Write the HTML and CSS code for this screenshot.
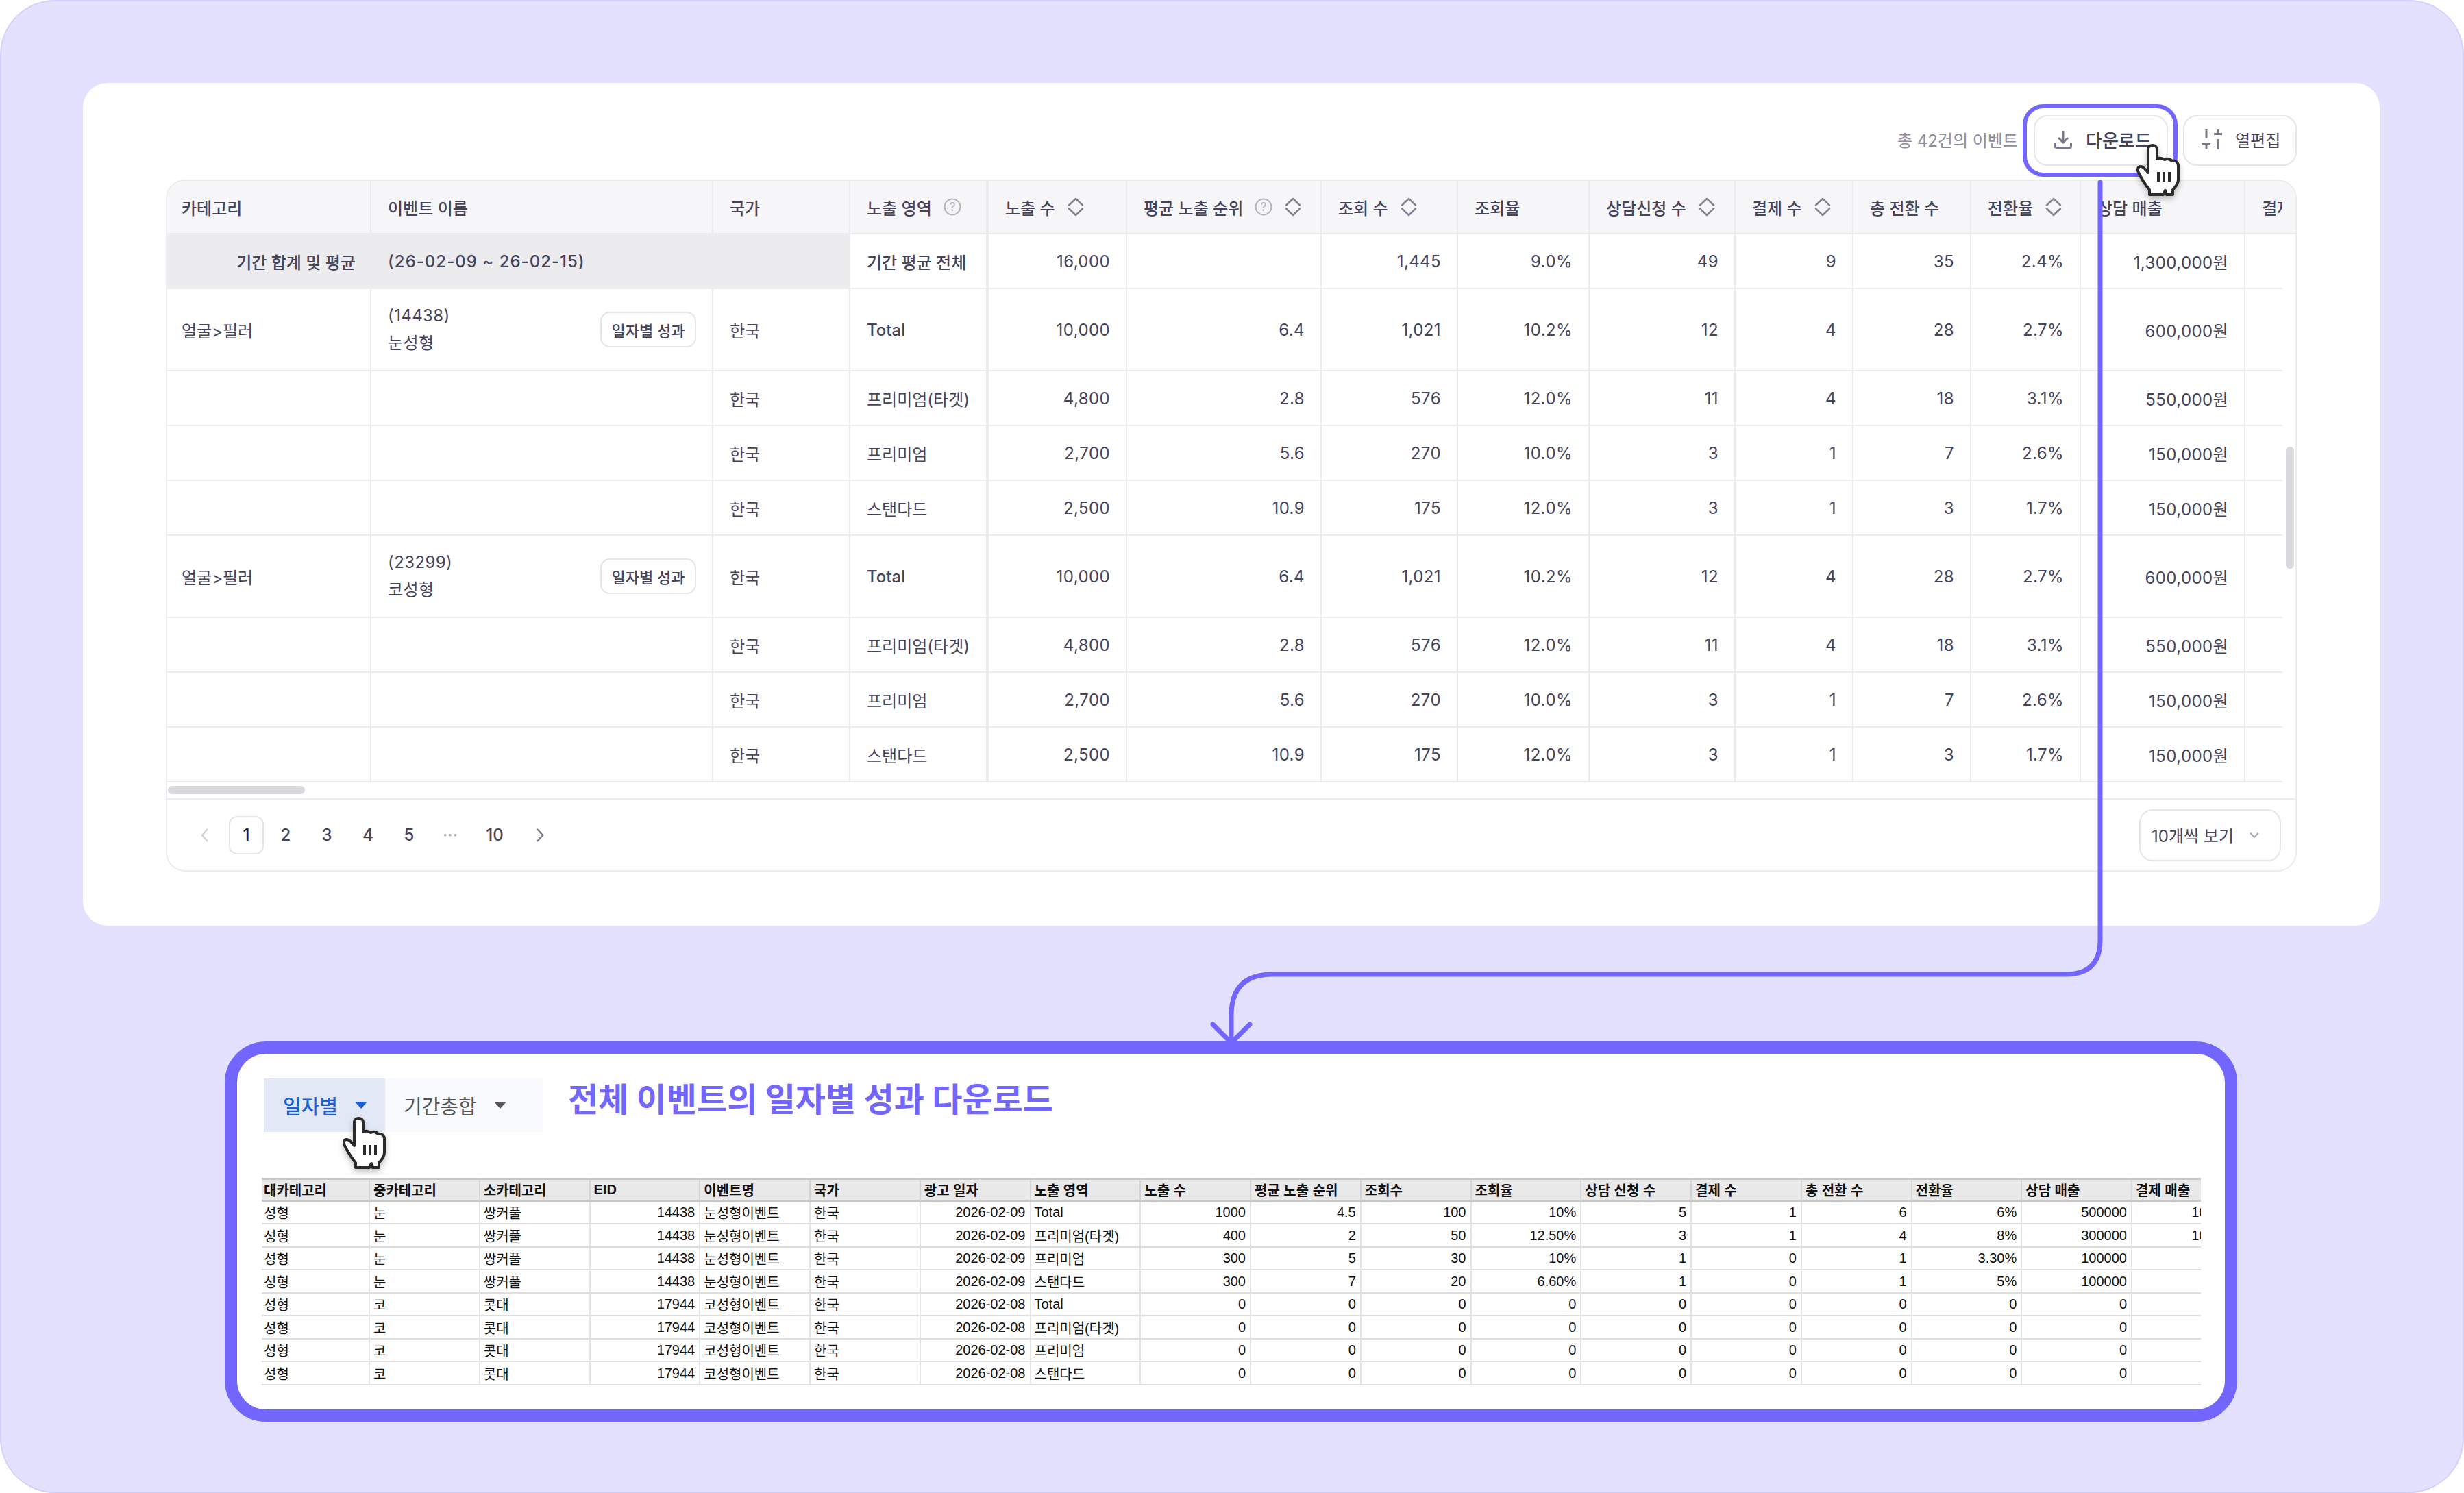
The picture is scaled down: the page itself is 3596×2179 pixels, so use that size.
FILE: index.html
```html
<!DOCTYPE html>
<html lang="ko">
<head>
    <meta charset="UTF-8">
    <title>이벤트 성과 다운로드</title>
    <link rel="stylesheet" href="styles.css">
</head>
<body>
    <svg class="icon-defs" width="0" height="0">
        <symbol id="i-sort" viewBox="0 0 26 28">
            <path d="M3 11.5 13 2l10 9.5M3 16.5 13 26l10-9.5" fill="none" stroke="currentColor" stroke-width="2.5" stroke-linecap="round" stroke-linejoin="round"/>
        </symbol>
        <symbol id="i-help" viewBox="0 0 26 26">
            <circle cx="13" cy="13" r="11.5" fill="none" stroke="currentColor" stroke-width="2"/>
            <text x="13" y="19" text-anchor="middle" font-size="17" font-family="Inter, sans-serif" fill="currentColor">?</text>
        </symbol>
        <symbol id="i-hand" viewBox="0 0 64 76" overflow="visible">
            <path d="M19 74V67C14 61 8 52 3 42 1 37 2 33 6 33 10 33 14 38 17 42V8C17 0 30 0 30 8V22C34 20 38 21 41 23 45 21 49 22 52 25 57 24 61 27 61 32V52C61 58 57 63 53 67V74H44L42 68 39 74Z" fill="#fff" stroke="#2a2a2a" stroke-width="4" stroke-linejoin="round"/>
            <path d="M32 41V55M40 41V55M48 41V55" fill="none" stroke="#2a2a2a" stroke-width="4"/>
        </symbol>
    </svg>

    <div class="frame">
        <section class="card">
            <div class="toolbar">
                <span class="total-count">총 42건의 이벤트</span>
                <div class="highlight">
                    <button class="tool-btn tool-btn-main">
                        <svg class="tool-icon" width="26" height="27" viewBox="0 0 26 27"><path d="M13 1v16M6 11l7 7 7-7M1.500 18v5.500q0 2 2 2h19q2 0 2-2V18" fill="none" stroke="currentColor" stroke-width="3"/></svg>
                        다운로드
                    </button>
                </div>
                <button class="tool-btn tool-btn-edit">
                    <svg class="tool-icon" width="29" height="29" viewBox="0 0 29 29"><path d="M6 0v13M6 22v7M0 21.500h12M23 0v5M23 14v15M17 6.500h12" fill="none" stroke="currentColor" stroke-width="3"/></svg>
                    열편집
                </button>
            </div>

            <div class="grid-box">
                <div class="grid-body">
                    <div class="grid-clip">
                        <table class="grid">
                            <colgroup>
                                <col class="c-298"><col class="c-499"><col class="c-200"><col class="c-202"><col class="c-202"><col class="c-284"><col class="c-199"><col class="c-192"><col class="c-213"><col class="c-172"><col class="c-172"><col class="c-160"><col class="c-240"><col class="c-240">
                            </colgroup>
                            <thead>
                                <tr>
                                    <th>카테고리</th>
                                    <th>이벤트 이름</th>
                                    <th>국가</th>
                                    <th class="sticky-edge"><span class="th-in">노출 영역<svg class="help" width="26" height="26"><use href="#i-help"/></svg></span></th>
                                    <th><span class="th-in">노출 수<svg class="sort" width="26" height="28"><use href="#i-sort"/></svg></span></th>
                                    <th><span class="th-in">평균 노출 순위<svg class="help" width="26" height="26"><use href="#i-help"/></svg><svg class="sort" width="26" height="28"><use href="#i-sort"/></svg></span></th>
                                    <th><span class="th-in">조회 수<svg class="sort" width="26" height="28"><use href="#i-sort"/></svg></span></th>
                                    <th>조회율</th>
                                    <th><span class="th-in">상담신청 수<svg class="sort" width="26" height="28"><use href="#i-sort"/></svg></span></th>
                                    <th><span class="th-in">결제 수<svg class="sort" width="26" height="28"><use href="#i-sort"/></svg></span></th>
                                    <th>총 전환 수</th>
                                    <th><span class="th-in">전환율<svg class="sort" width="26" height="28"><use href="#i-sort"/></svg></span></th>
                                    <th>상담 매출</th>
                                    <th>결제 매출</th>
                                </tr>
                            </thead>
                            <tbody>
                                <tr class="row-sum">
                                    <td class="sum-title">기간 합계 및 평균</td>
                                    <td class="sum-title sum-range" colspan="2">(26-02-09 ~ 26-02-15)</td>
                                    <td class="sticky-edge strong">기간 평균 전체</td>
                                    <td class="num">16,000</td><td class="num"></td><td class="num">1,445</td><td class="num">9.0%</td><td class="num">49</td><td class="num">9</td><td class="num">35</td><td class="num">2.4%</td><td class="num">1,300,000원</td><td></td>
                                </tr>
                                <tr class="row-tall">
                                    <td>얼굴&gt;필러</td>
                                    <td><div class="event-cell"><div class="event-name">(14438)<br>눈성형</div><button class="daily-btn">일자별 성과</button></div></td>
                                    <td>한국</td><td class="sticky-edge strong">Total</td>
                                    <td class="num">10,000</td><td class="num">6.4</td><td class="num">1,021</td><td class="num">10.2%</td><td class="num">12</td><td class="num">4</td><td class="num">28</td><td class="num">2.7%</td><td class="num">600,000원</td><td></td>
                                </tr>
                                <tr>
                                    <td></td><td></td><td>한국</td><td class="sticky-edge">프리미엄(타겟)</td>
                                    <td class="num">4,800</td><td class="num">2.8</td><td class="num">576</td><td class="num">12.0%</td><td class="num">11</td><td class="num">4</td><td class="num">18</td><td class="num">3.1%</td><td class="num">550,000원</td><td></td>
                                </tr>
                                <tr>
                                    <td></td><td></td><td>한국</td><td class="sticky-edge">프리미엄</td>
                                    <td class="num">2,700</td><td class="num">5.6</td><td class="num">270</td><td class="num">10.0%</td><td class="num">3</td><td class="num">1</td><td class="num">7</td><td class="num">2.6%</td><td class="num">150,000원</td><td></td>
                                </tr>
                                <tr>
                                    <td></td><td></td><td>한국</td><td class="sticky-edge">스탠다드</td>
                                    <td class="num">2,500</td><td class="num">10.9</td><td class="num">175</td><td class="num">12.0%</td><td class="num">3</td><td class="num">1</td><td class="num">3</td><td class="num">1.7%</td><td class="num">150,000원</td><td></td>
                                </tr>
                                <tr class="row-tall">
                                    <td>얼굴&gt;필러</td>
                                    <td><div class="event-cell"><div class="event-name">(23299)<br>코성형</div><button class="daily-btn">일자별 성과</button></div></td>
                                    <td>한국</td><td class="sticky-edge strong">Total</td>
                                    <td class="num">10,000</td><td class="num">6.4</td><td class="num">1,021</td><td class="num">10.2%</td><td class="num">12</td><td class="num">4</td><td class="num">28</td><td class="num">2.7%</td><td class="num">600,000원</td><td></td>
                                </tr>
                                <tr>
                                    <td></td><td></td><td>한국</td><td class="sticky-edge">프리미엄(타겟)</td>
                                    <td class="num">4,800</td><td class="num">2.8</td><td class="num">576</td><td class="num">12.0%</td><td class="num">11</td><td class="num">4</td><td class="num">18</td><td class="num">3.1%</td><td class="num">550,000원</td><td></td>
                                </tr>
                                <tr>
                                    <td></td><td></td><td>한국</td><td class="sticky-edge">프리미엄</td>
                                    <td class="num">2,700</td><td class="num">5.6</td><td class="num">270</td><td class="num">10.0%</td><td class="num">3</td><td class="num">1</td><td class="num">7</td><td class="num">2.6%</td><td class="num">150,000원</td><td></td>
                                </tr>
                                <tr>
                                    <td></td><td></td><td>한국</td><td class="sticky-edge">스탠다드</td>
                                    <td class="num">2,500</td><td class="num">10.9</td><td class="num">175</td><td class="num">12.0%</td><td class="num">3</td><td class="num">1</td><td class="num">3</td><td class="num">1.7%</td><td class="num">150,000원</td><td></td>
                                </tr>
                            </tbody>
                        </table>
                    </div>
                    <div class="v-rail">
                        <div class="v-rail-head"></div>
                        <div class="v-thumb"></div>
                    </div>
                </div>
                <div class="h-rail"><div class="h-thumb"></div></div>
                <div class="pager-row">
                    <div class="pager">
                        <svg class="pager-prev" width="14" height="22" viewBox="0 0 14 22"><path d="M11 2 3 11l8 9" fill="none" stroke="currentColor" stroke-width="2.500"/></svg>
                        <span class="page page-on">1</span>
                        <span class="page">2</span>
                        <span class="page">3</span>
                        <span class="page">4</span>
                        <span class="page">5</span>
                        <span class="page page-dots">···</span>
                        <span class="page page-wide">10</span>
                        <svg class="pager-next" width="14" height="22" viewBox="0 0 14 22"><path d="M3 2l8 9-8 9" fill="none" stroke="currentColor" stroke-width="2.500"/></svg>
                    </div>
                    <div class="page-size">
                        10개씩 보기
                        <svg width="14" height="10" viewBox="0 0 14 10"><path d="M1 1.500l6 6.500 6-6.500" fill="none" stroke="currentColor" stroke-width="2.200"/></svg>
                    </div>
                </div>
            </div>
        </section>

        <section class="export-box">
            <div class="export-head">
                <div class="tabs">
                    <div class="tab tab-on">일자별<span class="caret"></span></div>
                    <div class="tab tab-off">기간총합<span class="caret"></span></div>
                </div>
                <h2 class="export-title">전체 이벤트의 일자별 성과 다운로드</h2>
            </div>
            <div class="sheet-clip">
                <table class="sheet">
                    <thead>
                        <tr><th>대카테고리</th><th>중카테고리</th><th>소카테고리</th><th>EID</th><th>이벤트명</th><th>국가</th><th>광고 일자</th><th>노출 영역</th><th>노출 수</th><th>평균 노출 순위</th><th>조회수</th><th>조회율</th><th>상담 신청 수</th><th>결제 수</th><th>총 전환 수</th><th>전환율</th><th>상담 매출</th><th>결제 매출</th></tr>
                    </thead>
                    <tbody>
                        <tr><td>성형</td><td>눈</td><td>쌍커풀</td><td class="r">14438</td><td>눈성형이벤트</td><td>한국</td><td class="r">2026-02-09</td><td>Total</td><td class="r">1000</td><td class="r">4.5</td><td class="r">100</td><td class="r">10%</td><td class="r">5</td><td class="r">1</td><td class="r">6</td><td class="r">6%</td><td class="r">500000</td><td class="r">100000</td></tr>
                        <tr><td>성형</td><td>눈</td><td>쌍커풀</td><td class="r">14438</td><td>눈성형이벤트</td><td>한국</td><td class="r">2026-02-09</td><td>프리미엄(타겟)</td><td class="r">400</td><td class="r">2</td><td class="r">50</td><td class="r">12.50%</td><td class="r">3</td><td class="r">1</td><td class="r">4</td><td class="r">8%</td><td class="r">300000</td><td class="r">100000</td></tr>
                        <tr><td>성형</td><td>눈</td><td>쌍커풀</td><td class="r">14438</td><td>눈성형이벤트</td><td>한국</td><td class="r">2026-02-09</td><td>프리미엄</td><td class="r">300</td><td class="r">5</td><td class="r">30</td><td class="r">10%</td><td class="r">1</td><td class="r">0</td><td class="r">1</td><td class="r">3.30%</td><td class="r">100000</td><td class="r">0</td></tr>
                        <tr><td>성형</td><td>눈</td><td>쌍커풀</td><td class="r">14438</td><td>눈성형이벤트</td><td>한국</td><td class="r">2026-02-09</td><td>스탠다드</td><td class="r">300</td><td class="r">7</td><td class="r">20</td><td class="r">6.60%</td><td class="r">1</td><td class="r">0</td><td class="r">1</td><td class="r">5%</td><td class="r">100000</td><td class="r">0</td></tr>
                        <tr><td>성형</td><td>코</td><td>콧대</td><td class="r">17944</td><td>코성형이벤트</td><td>한국</td><td class="r">2026-02-08</td><td>Total</td><td class="r">0</td><td class="r">0</td><td class="r">0</td><td class="r">0</td><td class="r">0</td><td class="r">0</td><td class="r">0</td><td class="r">0</td><td class="r">0</td><td class="r">0</td></tr>
                        <tr><td>성형</td><td>코</td><td>콧대</td><td class="r">17944</td><td>코성형이벤트</td><td>한국</td><td class="r">2026-02-08</td><td>프리미엄(타겟)</td><td class="r">0</td><td class="r">0</td><td class="r">0</td><td class="r">0</td><td class="r">0</td><td class="r">0</td><td class="r">0</td><td class="r">0</td><td class="r">0</td><td class="r">0</td></tr>
                        <tr><td>성형</td><td>코</td><td>콧대</td><td class="r">17944</td><td>코성형이벤트</td><td>한국</td><td class="r">2026-02-08</td><td>프리미엄</td><td class="r">0</td><td class="r">0</td><td class="r">0</td><td class="r">0</td><td class="r">0</td><td class="r">0</td><td class="r">0</td><td class="r">0</td><td class="r">0</td><td class="r">0</td></tr>
                        <tr><td>성형</td><td>코</td><td>콧대</td><td class="r">17944</td><td>코성형이벤트</td><td>한국</td><td class="r">2026-02-08</td><td>스탠다드</td><td class="r">0</td><td class="r">0</td><td class="r">0</td><td class="r">0</td><td class="r">0</td><td class="r">0</td><td class="r">0</td><td class="r">0</td><td class="r">0</td><td class="r">0</td></tr>
                    </tbody>
                </table>
            </div>
        </section>

        <!-- connector from the download button to the export preview -->
        <svg class="connector" width="3596" height="2179" viewBox="0 0 3596 2179">
            <path d="M3065 266V1372Q3065 1422 3015 1422H1857Q1797 1422 1797 1482V1522M1770 1495 1797 1522 1824 1495" fill="none" stroke="#7366ff" stroke-width="7" stroke-linecap="round"/>
        </svg>
        <svg class="hand hand-download" width="64" height="76"><use href="#i-hand"/></svg>
        <svg class="hand hand-tab" width="64" height="76"><use href="#i-hand"/></svg>
    </div>
</body>
</html>
```

FILE: styles.css
```css
:root {
    --accent: #7366ff;
    --lavender: #e4e1ff;
    --line: #ececee;
    --text: #46445c;
    --muted: #8e8d9e;
}

* {
    margin: 0;
    padding: 0;
    box-sizing: border-box;
    font-family: Inter, 'Noto Sans CJK KR', sans-serif;
}

body {
    background: #fff;
    color: var(--text);
    width: 3596px;
    height: 2179px;
    overflow: hidden;
}

.icon-defs {
    position: absolute;
}

.frame {
    position: relative;
    width: 3596px;
    height: 2179px;
    padding: 119px 119px 0;
    background: var(--lavender);
    border: 2px solid #d5d1fd;
    border-radius: 80px;
    display: flex;
    flex-direction: column;
    align-items: flex-start;
}

/* top card */
.card {
    width: 3352px;
    height: 1230px;
    padding: 31px 121px 0;
    background: #fff;
    border-radius: 36px;
}

.toolbar {
    height: 106px;
    margin-bottom: 4px;
    display: flex;
    align-items: center;
    justify-content: flex-end;
}

.total-count {
    font-size: 24px;
    color: var(--muted);
    margin-right: 7px;
    padding-bottom: 3px;
}

.highlight {
    padding: 10px 8px 10px 10px;
    border: 6px solid var(--accent);
    border-radius: 30px;
    margin-right: 8px;
}

.tool-btn {
    height: 74px;
    padding-bottom: 3px;
    display: flex;
    align-items: center;
    background: #fff;
    color: var(--text);
    border: 2px solid #e6e6e8;
    border-radius: 20px;
}

.tool-btn-main {
    width: 196px;
    padding-left: 28px;
    gap: 20px;
    font-size: 26px;
    font-weight: 500;
}

.tool-btn-edit {
    width: 166px;
    padding-left: 26px;
    gap: 19px;
    font-size: 24px;
}

.tool-icon {
    color: #7a7889;
    flex-shrink: 0;
}

/* data grid */
.grid-box {
    width: 3110px;
    height: 1010px;
    border: 2px solid var(--line);
    border-radius: 28px;
    overflow: hidden;
}

.grid-body {
    display: flex;
    height: 878px;
}

.grid-clip {
    width: 3087px;
    overflow: hidden;
}

.grid {
    width: 3273px;
    table-layout: fixed;
    border-collapse: separate;
    border-spacing: 0;
    font-size: 24px;
}

.c-298 { width: 298px; }
.c-499 { width: 499px; }
.c-200 { width: 200px; }
.c-202 { width: 202px; }
.c-284 { width: 284px; }
.c-199 { width: 199px; }
.c-192 { width: 192px; }
.c-213 { width: 213px; }
.c-172 { width: 172px; }
.c-160 { width: 160px; }
.c-240 { width: 240px; }

.grid th,
.grid td {
    height: 80px;
    padding: 0 23px 0 24px;
    text-align: left;
    white-space: nowrap;
    overflow: hidden;
    border-right: 2px solid var(--line);
    border-bottom: 2px solid var(--line);
}

.grid th:first-child,
.grid tr > td:first-child {
    padding-left: 21px;
}

.grid th {
    height: 78px;
    background: #f6f6f8;
    font-weight: 500;
}

.grid .sticky-edge {
    border-right-width: 4px;
}

.th-in {
    display: flex;
    align-items: center;
    gap: 17px;
}

.help {
    color: #b3b2bf;
    flex-shrink: 0;
}

.sort {
    color: #82818f;
    flex-shrink: 0;
}

.grid .num {
    text-align: right;
    letter-spacing: 0.4px;
}

.strong {
    font-weight: 500;
}

.grid .row-tall td {
    height: 120px;
}

.row-sum .sum-title {
    background: #ececee;
    font-weight: 500;
    border-right: none;
}

.row-sum .sum-range {
    letter-spacing: 1px;
}

.row-sum td:first-child {
    text-align: right;
}

.event-cell {
    display: flex;
    align-items: center;
    justify-content: space-between;
}

.event-name {
    line-height: 40px;
    letter-spacing: 0.4px;
}

.daily-btn {
    width: 140px;
    height: 52px;
    background: #fff;
    color: var(--text);
    border: 2px solid #e6e6e8;
    border-radius: 14px;
    font-size: 22px;
    font-weight: 500;
}

.v-rail {
    flex: 1;
}

.v-rail-head {
    height: 78px;
    background: #f6f6f8;
    border-bottom: 2px solid var(--line);
}

.v-thumb {
    width: 12px;
    height: 178px;
    margin: 310px 0 0 5px;
    background: #d9d9de;
    border-radius: 6px;
}

.h-rail {
    height: 25px;
    padding: 5px 0 0 1px;
    border-bottom: 2px solid var(--line);
}

.h-thumb {
    width: 200px;
    height: 12px;
    background: #d9d9de;
    border-radius: 6px;
}

.pager-row {
    height: 103px;
    padding: 0 21px 0 48px;
    display: flex;
    align-items: center;
    justify-content: space-between;
}

.pager {
    display: flex;
    align-items: center;
    font-weight: 500;
    font-size: 24px;
}

.pager-prev {
    color: #d4d3dc;
    margin-right: 28px;
}

.pager-next {
    color: #7a7889;
    margin-left: 24px;
}

.page {
    width: 60px;
    height: 56px;
    display: flex;
    align-items: center;
    justify-content: center;
}

.page-on {
    width: 51px;
    margin-right: 2px;
    color: #1f1d36;
    border: 2px solid #e6e6e8;
    border-radius: 12px;
}

.page-dots {
    color: #a5a4b2;
}

.page-wide {
    width: 70px;
}

.page-size {
    width: 207px;
    height: 76px;
    padding-left: 16px;
    display: flex;
    align-items: center;
    gap: 23px;
    font-size: 24px;
    border: 2px solid #e6e6e8;
    border-radius: 20px;
}

.page-size svg {
    color: #a9a8b5;
}

/* export preview */
.export-box {
    width: 2937px;
    height: 555px;
    margin: 169px 0 0 207px;
    padding: 36px 17px 0 36px;
    background: #fff;
    border: 18px solid var(--accent);
    border-radius: 60px;
}

.export-head {
    display: flex;
    align-items: center;
    gap: 37px;
    height: 78px;
    margin: 0 0 67px 3px;
}

.tabs {
    display: flex;
    height: 78px;
    font-size: 29px;
    font-weight: 500;
    color: #555;
}

.tab {
    display: flex;
    align-items: center;
    gap: 25px;
}

.tab-on {
    width: 177px;
    padding-left: 28px;
    background: #e2e8f5;
    color: #1a5fd8;
}

.tab-off {
    width: 230px;
    padding-left: 27px;
    background: #f9fafd;
    font-weight: 400;
}

.caret {
    width: 0;
    height: 0;
    border-left: 9px solid transparent;
    border-right: 9px solid transparent;
    border-top: 10px solid currentColor;
}

.export-title {
    font-size: 48px;
    line-height: 60px;
    margin-bottom: 16px;
    font-weight: 700;
    color: var(--accent);
}

.sheet-clip {
    width: 2830px;
    overflow: hidden;
}

.sheet {
    width: 2891px;
    table-layout: fixed;
    border-collapse: separate;
    border-spacing: 0;
    font-size: 20px;
    color: #111;
}

.sheet th,
.sheet td {
    height: 33px;
    padding: 0 6px 0 5px;
    text-align: left;
    white-space: nowrap;
    overflow: hidden;
    font-family: 'Liberation Sans', 'Noto Sans CJK KR', sans-serif;
    border-right: 2px solid #e4e4e4;
    border-bottom: 2px solid #dedede;
}

.sheet th:first-child {
    width: 158px;
}

.sheet th:first-child,
.sheet td:first-child {
    padding-left: 3px;
}

.sheet th {
    height: 34px;
    background: #e9e9e9;
    font-weight: 700;
    border-top: 3px solid #c8c8c8;
    border-bottom: 3px solid #c8c8c8;
    border-right-color: #d4d4d4;
}

.sheet tbody tr:nth-child(even) td {
    height: 34px;
}

.sheet .r {
    text-align: right;
}

/* overlays */
.connector {
    position: absolute;
    left: -2px;
    top: -2px;
    pointer-events: none;
}

.hand {
    position: absolute;
    filter: drop-shadow(0 4px 4px rgba(0, 0, 0, 0.25));
}

.hand-download {
    left: 3116px;
    top: 208px;
}

.hand-tab {
    left: 498px;
    top: 1628px;
}
```
